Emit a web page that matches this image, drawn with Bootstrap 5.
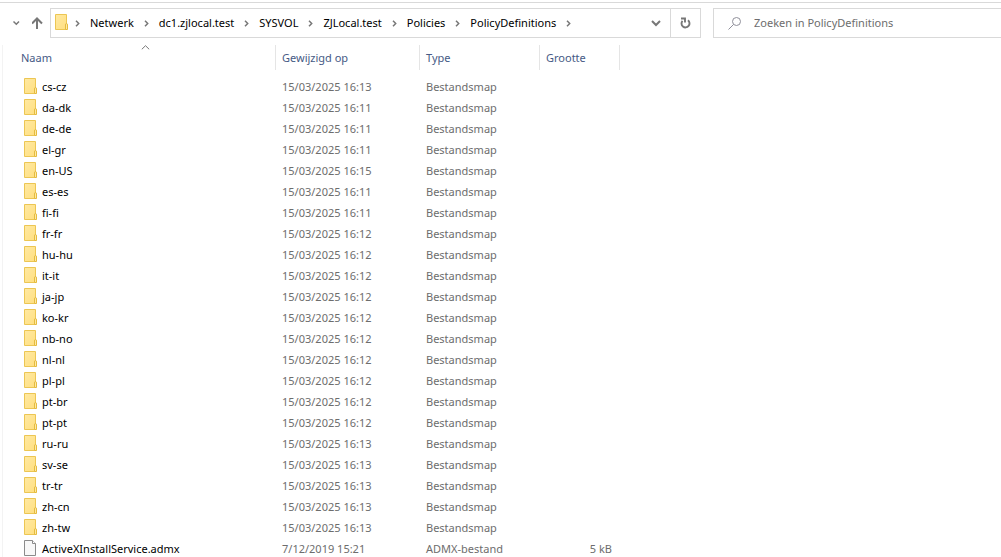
<!DOCTYPE html>
<html lang="nl">
<head>
<meta charset="utf-8">
<meta name="viewport" content="width=device-width, initial-scale=1">
<title>PolicyDefinitions</title>
<link rel="stylesheet" href="https://cdn.jsdelivr.net/npm/bootstrap@5.3.0/dist/css/bootstrap.min.css">
<style>
  body { font: 11px/20px "Noto Sans", "Open Sans", sans-serif; color: #000; background: #fff; }
  svg { display: block; flex: none; }
  .explorer { padding-top: 2px; }
  .toolbar { border-top: 1px solid #d9d9d9; padding: 5px 0 7px 12px; }
  .tool-btn { border: 0; background: none; padding: 0; color: #777; }
  .address, .search { height: 30px; border: 1px solid #d9d9d9; }
  .address { width: 651px; margin-left: 6px; padding-left: 4px; }
  .crumbs { gap: 10px; padding-left: 6px; }
  .crumbs li { gap: 10px; }
  .crumbs a { color: #000; text-decoration: none; }
  .crumbs svg { color: #777; }
  .drop { width: 28px; }
  .refresh { width: 30px; border-left: 1px solid #d9d9d9; }
  .search { margin-left: 12px; padding-left: 14px; gap: 13px; border-right: 0; }
  .search input { border: 0; padding: 0; outline: 0; background: none; min-width: 0; }
  .search input::placeholder { color: #6d6d6d; opacity: 1; }
  .listing { margin-left: 2px; border-left: 1px solid #f3f3f3; }
  .files { width: 617px; table-layout: fixed; border-collapse: separate; border-spacing: 0; }
  .c-name { width: 273px; } .c-date { width: 144px; } .c-type { width: 120px; } .c-size { width: 80px; }
  .files th { height: 25px; padding: 0 6px; font-weight: 400; color: #465a85; border-right: 1px solid #e5e5e5; position: relative; }
  .files th:first-child { padding-left: 18px; }
  .sort { position: absolute; top: 0; left: 138px; color: #777; }
  .files .spacer { height: 6px; padding: 0; }
  .files tbody td { height: 21px; padding: 0 8px 0 6px; color: #6d6d6d; white-space: nowrap; }
  .files tbody td:first-child { padding-left: 21px; color: #000; }
  .entry { gap: 4px; }
</style>
</head>
<body class="vh-100 overflow-hidden">
<svg width="0" height="0" class="position-absolute" aria-hidden="true">
  <defs>
    <linearGradient id="gold" x1="0" y1="0" x2="1" y2="1"><stop offset="0" stop-color="#ffe9a2"/><stop offset="1" stop-color="#ffdf80"/></linearGradient>
    <symbol id="folder" viewBox="0 0 14 18"><path d="M.5.5h11v15H.5z" fill="url(#gold)" stroke="#ecc653"/><path d="M10.500 15.500v-4.500q0-1.500 1-1.500t1 1.500v4.500z" fill="#ffe9a2" stroke="#e5bb3f"/></symbol>
    <symbol id="file" viewBox="0 0 14 18"><path d="M.5.5h8l3 3v12H.5z" fill="#f8f8f8" stroke="#8b8b8b"/><path d="M8.500.5v3h3" fill="#fff" stroke="#8b8b8b"/></symbol>
    <symbol id="next" viewBox="0 0 5 7"><path d="M1 .8 3.700 3.500 1 6.200" fill="none" stroke="currentColor" stroke-width="1.500"/></symbol>
  </defs>
</svg>
<main class="explorer h-100 d-flex flex-column">
  <header class="toolbar d-flex align-items-center">
    <button class="tool-btn" type="button" aria-label="Recente locaties"><svg width="8" height="6" viewBox="0 0 8 6"><path d="M1.500 1.500 4.300 4.200 7 1.500" fill="none" stroke="currentColor" stroke-width="1.500"/></svg></button>
    <button class="tool-btn ms-2 ps-1" type="button" aria-label="Omhoog"><svg width="12" height="14" viewBox="0 0 12 14"><path d="M5 13V2.500M0 7.500l5-5 5 5" fill="none" stroke="currentColor" stroke-width="2"/></svg></button>
    <div class="address d-flex align-items-center flex-shrink-0">
      <svg width="14" height="18"><use href="#folder"/></svg>
      <nav class="flex-grow-1" aria-label="Adres"><ol class="crumbs list-unstyled d-flex align-items-center mb-0" id="crumbs"></ol></nav>
      <button class="tool-btn drop d-flex justify-content-center" type="button" aria-label="Vorige locaties"><svg width="10" height="7" viewBox="0 0 10 7"><path d="m1 1 4 4 4-4" fill="none" stroke="currentColor" stroke-width="2"/></svg></button>
      <button class="tool-btn refresh h-100 d-flex align-items-center justify-content-center" type="button" aria-label="Vernieuwen"><svg width="11" height="12" viewBox="0 0 11 12"><path d="M8 3.300a4 4 0 1 1-5.500.5M1 1.500h4v4" fill="none" stroke="currentColor" stroke-width="1.900"/></svg></button>
    </div>
    <div class="search d-flex align-items-center flex-grow-1">
      <svg width="13" height="13" viewBox="0 0 13 13"><path d="m.5 12.500 5-5" stroke="#8f8f9a"/><circle cx="8.500" cy="4.500" r="4" fill="none" stroke="#8f8f9a"/></svg>
      <input class="flex-grow-1" type="search" placeholder="Zoeken in PolicyDefinitions" aria-label="Zoeken in PolicyDefinitions">
    </div>
  </header>
  <section class="listing flex-grow-1 overflow-hidden">
    <table class="files">
      <colgroup><col class="c-name"><col class="c-date"><col class="c-type"><col class="c-size"></colgroup>
      <thead>
        <tr><th scope="col">Naam<svg class="sort" width="9" height="5" viewBox="0 0 9 5"><path d="m.8 4.300 3.700-3.600 3.700 3.600" fill="none" stroke="currentColor"/></svg></th><th scope="col">Gewijzigd op</th><th scope="col">Type</th><th scope="col">Grootte</th></tr>
        <tr><td class="spacer" colspan="4"></td></tr>
      </thead>
      <tbody id="rows"></tbody>
    </table>
  </section>
</main>
<script src="https://cdn.jsdelivr.net/npm/bootstrap@5.3.0/dist/js/bootstrap.bundle.min.js"></script>
<script>
  const arrow = '<svg width="5" height="7" aria-hidden="true"><use href="#next"/></svg>';
  const path = ['Netwerk', 'dc1.zjlocal.test', 'SYSVOL', 'ZJLocal.test', 'Policies', 'PolicyDefinitions'];
  document.getElementById('crumbs').innerHTML =
    path.map(p => `<li class="d-flex align-items-center">${arrow}<a href="#">${p}</a></li>`).join('') + `<li>${arrow}</li>`;

  const folders = { 'cs-cz': 13, 'da-dk': 11, 'de-de': 11, 'el-gr': 11, 'en-US': 15, 'es-es': 11, 'fi-fi': 11,
    'fr-fr': 12, 'hu-hu': 12, 'it-it': 12, 'ja-jp': 12, 'ko-kr': 12, 'nb-no': 12, 'nl-nl': 12, 'pl-pl': 12,
    'pt-br': 12, 'pt-pt': 12, 'ru-ru': 13, 'sv-se': 13, 'tr-tr': 13, 'zh-cn': 13, 'zh-tw': 13 };
  const entries = Object.entries(folders).map(([n, m]) => ['folder', n, `15/03/2025 16:${m}`, 'Bestandsmap', '']);
  entries.push(['file', 'ActiveXInstallService.admx', '7/12/2019 15:21', 'ADMX-bestand', '5 kB']);
  document.getElementById('rows').innerHTML = entries.map(([icon, name, date, type, size]) =>
    `<tr><td><div class="entry d-flex align-items-center"><svg width="14" height="18" aria-hidden="true"><use href="#${icon}"/></svg>${name}</div></td><td>${date}</td><td>${type}</td><td class="text-end">${size}</td></tr>`).join('');
</script>
</body>
</html>
